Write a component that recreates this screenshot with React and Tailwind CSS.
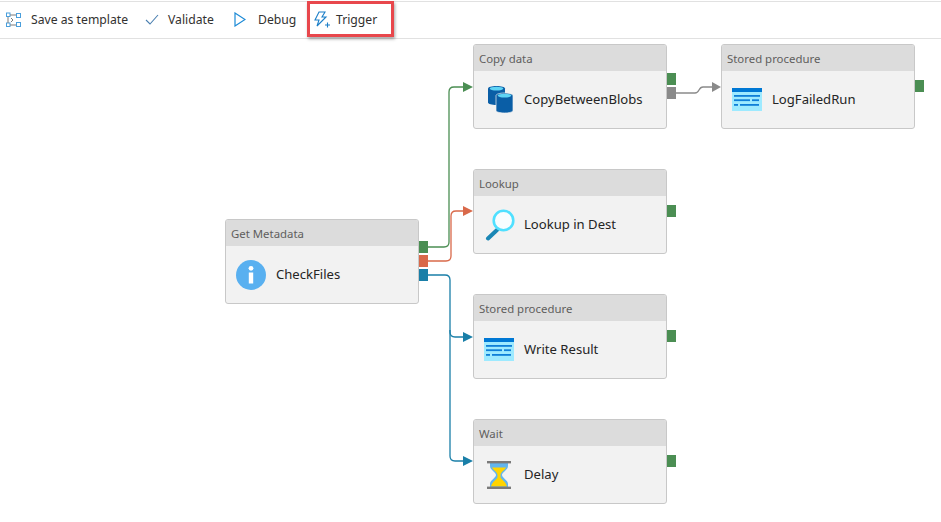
import React from "react";

const F = { fontFamily: '"Noto Sans","Open Sans",sans-serif' };

function ProcIcon() {
  return (
    <svg width="30" height="24" viewBox="0 0 30 24">
      <rect x="0" y="0" width="30" height="23" fill="#9eeaff" />
      <rect x="0" y="0" width="30" height="4" fill="#0078d4" />
      <g fill="#0f7fd8">
        <rect x="2" y="7" width="26" height="1.800" />
        <rect x="2" y="11.300" width="16" height="1.800" />
        <rect x="20" y="11.300" width="7" height="1.800" />
        <rect x="2" y="16" width="4" height="1.800" />
        <rect x="8" y="16" width="19" height="1.800" />
      </g>
    </svg>
  );
}

function CopyIcon() {
  return (
    <svg width="25" height="27" viewBox="0 0 25 27">
      <path d="M0 2.500c0-1.400 3.800-2.500 8.500-2.500s8.500 1.100 8.500 2.500v14c0 1.400-3.800 2.500-8.500 2.500s-8.500-1.100-8.500-2.500z" fill="#0a5ea6" />
      <ellipse cx="8.500" cy="2.600" rx="6.800" ry="1.900" fill="#5fd4f5" />
      <path d="M8 9.500c0-1.400 3.800-2.500 8.500-2.500s8.500 1.100 8.500 2.500v15c0 1.400-3.800 2.500-8.500 2.500s-8.500-1.100-8.500-2.500z" fill="#0a5ea6" stroke="#f2f2f2" strokeWidth="0.700" />
      <ellipse cx="16.500" cy="9.600" rx="6.800" ry="1.900" fill="#5fd4f5" />
    </svg>
  );
}

function LookupIcon() {
  return (
    <svg width="30" height="32" viewBox="0 0 30 32">
      <path d="M3 29.500 L12 21" stroke="#1b87b5" strokeWidth="4" strokeLinecap="round" />
      <circle cx="18.500" cy="11.500" r="9.800" fill="#f8fdff" stroke="#50e0ff" strokeWidth="2.600" />
    </svg>
  );
}

function InfoIcon() {
  return (
    <svg width="30" height="30" viewBox="0 0 30 30">
      <circle cx="15" cy="15" r="15" fill="#59b0f0" />
      <rect x="12.800" y="12.500" width="4.400" height="11" fill="#fff" />
      <circle cx="15" cy="8.300" r="2.400" fill="#fff" />
    </svg>
  );
}

function WaitIcon() {
  return (
    <svg width="24" height="28" viewBox="0 0 24 28">
      <path d="M3 2v3c0 4 6 6 6 9S3 19 3 23v3h18v-3c0-4-6-6-6-9s6-5 6-9V2z" fill="#62b5ee" />
      <path d="M5 6.500h14c-1 2.500-5.500 4.500-5.500 7.500v2c0 2 5.500 4.500 6.500 9.500H4c1-5 6.500-7.500 6.500-9.500v-2c0-3-4.500-5-5.500-7.500z" fill="#ffd400" />
      <rect x="0" y="0" width="24" height="2.400" fill="#7a7a7a" />
      <rect x="0" y="25.600" width="24" height="2.400" fill="#7a7a7a" />
    </svg>
  );
}

function Node({ x, y, type, name, icon, iconBox, ports }) {
  return (
    <div className="absolute w-[194px] h-[85px]" style={{ left: x, top: y }}>
      <div className="flex flex-col w-full h-full rounded-[3px] border border-[#c8c8c8] bg-[#f2f2f2] overflow-hidden">
        <div className="h-[26px] shrink-0 bg-[#dcdcdc] pl-[5px] text-[11.400px] leading-[28px] text-[#605e5c]">{type}</div>
        <div className="flex-1 flex items-center">
          <div className={`flex justify-center shrink-0 ${iconBox}`}>{icon}</div>
          <div className="text-[13.100px] text-[#252525] whitespace-nowrap">{name}</div>
        </div>
      </div>
      {ports.map((p) => (
        <div
          key={p.y}
          className="absolute left-[194px] w-[9px] h-[12px]"
          style={{ top: p.y, backgroundColor: p.c }}
        />
      ))}
    </div>
  );
}

const GREEN = "#4b8e53";
const ORANGE = "#d9694a";
const BLUE = "#1a7fa8";
const GRAY = "#8a8a8a";

function ToolItem({ icon, label, className }) {
  return (
    <div className={`flex items-center ${className}`}>
      {icon}
      <span className="text-[12.200px] text-[#323130] whitespace-nowrap">{label}</span>
    </div>
  );
}

export default function App() {
  return (
    <div className="relative w-[941px] h-[522px] bg-white overflow-hidden" style={F}>
      <div className="mt-px h-[38px] border-t border-b border-[#e1e1e1] flex items-center pl-[6px]">
        <ToolItem
          className="w-[139px] gap-[10px]"
          label="Save as template"
          icon={
            <svg width="15" height="16" viewBox="0 0 15 16" fill="none" stroke="#4a9fdc" strokeWidth="1">
              <rect x="0.500" y="1" width="3.500" height="3.500" />
              <rect x="10.500" y="1.500" width="4" height="4" />
              <rect x="0.500" y="11" width="3.500" height="3.500" />
              <rect x="10.500" y="10.500" width="4" height="4" />
              <path d="M4 3h6M4 13h6M2 5v6M5 6l2 2-2 2" stroke="#7a7a7a" />
            </svg>
          }
        />
        <ToolItem
          className="w-[89px] gap-[9px]"
          label="Validate"
          icon={
            <svg width="14" height="11" viewBox="0 0 14 11" fill="none" stroke="#4a7fb0" strokeWidth="1.100">
              <path d="M1 6l4 4 8-9" />
            </svg>
          }
        />
        <ToolItem
          className="w-[74px] gap-[12px]"
          label="Debug"
          icon={
            <svg width="12" height="15" viewBox="0 0 12 15" fill="none" stroke="#1c8ad6" strokeWidth="1.200">
              <path d="M1 1v13l10-6.500z" />
            </svg>
          }
        />
        <ToolItem
          className="relative gap-[6px] pl-[6px] h-[36px]"
          label="Trigger"
          icon={
            <svg width="16" height="18" viewBox="0 0 16 18" fill="none" stroke="#1c7fc8" strokeWidth="1.100">
              <path d="M5 1h6L8 6h4L3 15l2-6H1z" />
              <path d="M11 14h5M13.500 11.500v5" />
            </svg>
          }
        />
      </div>
      <div className="absolute left-[307px] top-[1px] w-[87px] h-[36px] border-[3px] border-[#e8474c] shadow-[1px_2px_3px_rgba(0,0,0,0.35)]" />

      <svg className="absolute left-0 top-0" width="941" height="522" fill="none">
        <path d="M428 247H444Q449 247 449 242V92Q449 87 454 87H464" stroke={GREEN} strokeWidth="1.300" />
        <path d="M463 82l10 5-10 5z" fill={GREEN} />
        <path d="M428 261H446Q451 261 451 256V216Q451 211 456 211H464" stroke={ORANGE} strokeWidth="1.300" />
        <path d="M463 206l10 5-10 5z" fill={ORANGE} />
        <path d="M428 275H445Q450 275 450 280V332Q450 337 455 337H464" stroke={BLUE} strokeWidth="1.300" />
        <path d="M463 332l10 5-10 5z" fill={BLUE} />
        <path d="M450 330V456Q450 461 455 461H464" stroke={BLUE} strokeWidth="1.300" />
        <path d="M463 456l10 5-10 5z" fill={BLUE} />
        <path d="M676 93H695C700 93 698 87 703 87H712" stroke={GRAY} strokeWidth="1.300" />
        <path d="M712 82l9 5-9 5z" fill={GRAY} />
      </svg>

      <Node x={473} y={44} type="Copy data" name="CopyBetweenBlobs" iconBox="w-[50px] pl-[2px]" icon={<CopyIcon />} ports={[{ y: 29, c: GREEN }, { y: 43, c: GRAY }]} />
      <Node x={721} y={44} type="Stored procedure" name="LogFailedRun" iconBox="w-[50px]" icon={<ProcIcon />} ports={[{ y: 36, c: GREEN }]} />
      <Node x={473} y={169} type="Lookup" name="Lookup in Dest" iconBox="w-[50px] pl-[1px]" icon={<LookupIcon />} ports={[{ y: 36, c: GREEN }]} />
      <Node x={225} y={219} type="Get Metadata" name="CheckFiles" iconBox="w-[50px]" icon={<InfoIcon />} ports={[{ y: 22, c: GREEN }, { y: 36, c: ORANGE }, { y: 50, c: BLUE }]} />
      <Node x={473} y={294} type="Stored procedure" name="Write Result" iconBox="w-[50px]" icon={<ProcIcon />} ports={[{ y: 36, c: GREEN }]} />
      <Node x={473} y={419} type="Wait" name="Delay" iconBox="w-[50px]" icon={<WaitIcon />} ports={[{ y: 36, c: GREEN }]} />
    </div>
  );
}
